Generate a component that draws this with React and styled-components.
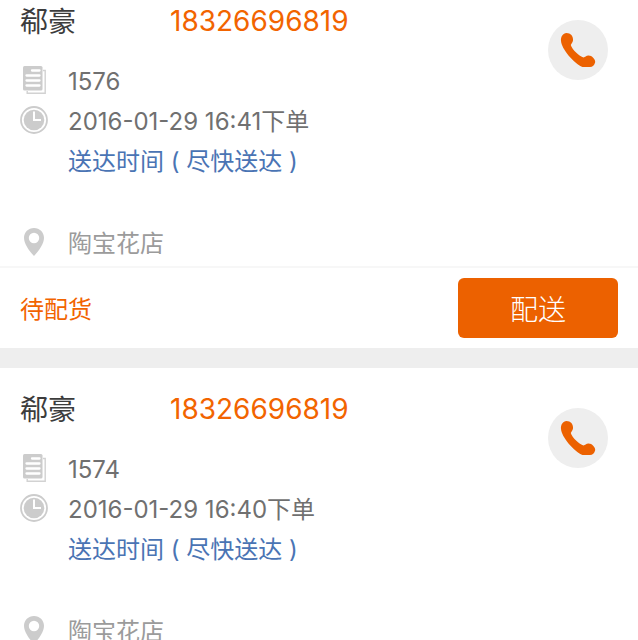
import React from "react";
import styled, { createGlobalStyle } from "styled-components";

const GlobalStyle = createGlobalStyle`
  * { box-sizing: border-box; }
  html { scrollbar-width: none; }
  body {
    margin: 0;
    background: #eeeeee;
    font-family: Inter, "Noto Sans CJK SC", sans-serif;
    font-optical-sizing: none;
    font-weight: 400;
  }
`;

const OrderList = styled.main`
  display: flex;
  flex-direction: column;
  gap: 20px;
`;

const Card = styled.article`
  background: #ffffff;
  padding-top: ${(p) => (p.$flush ? 0 : 20)}px;
`;

const CardBody = styled.div`
  display: flex;
  justify-content: space-between;
  align-items: flex-start;
  padding: 0 30px 4px 20px;
  border-bottom: 2px solid #f7f7f7;
`;

const Details = styled.div`
  flex: 1;
  min-width: 0;
`;

const Customer = styled.header`
  display: grid;
  grid-template-columns: 150px 1fr;
  align-items: center;
  height: 40px;
  margin-bottom: 20px;
`;

const Name = styled.h2`
  margin: 0;
  padding-top: 4px;
  font-size: 28px;
  line-height: 36px;
  font-weight: 400;
  color: #3c3c3c;
`;

const Phone = styled.a`
  padding-top: 2px;
  font-size: 28px;
  line-height: 38px;
  color: #f26400;
  text-decoration: none;
`;

const Row = styled.div`
  display: grid;
  grid-template-columns: 28px 1fr;
  column-gap: 20px;
  align-items: center;
  height: 40px;
  margin-top: ${(p) => (p.$spaced ? 42 : 0)}px;
`;

const tones = { normal: "#707070", info: "#4a74b4", muted: "#9b9b9b" };

const RowText = styled.span`
  grid-column: 2;
  padding-top: 4px;
  font-size: 24px;
  line-height: 36px;
  white-space: nowrap;
  color: ${(p) => tones[p.$tone || "normal"]};
`;

const CallButton = styled.button`
  display: flex;
  align-items: center;
  justify-content: center;
  width: 60px;
  height: 60px;
  margin-top: 20px;
  padding: 0;
  border: 0;
  border-radius: 50%;
  background: #eeeeee;
  cursor: pointer;
`;

const CardFooter = styled.footer`
  display: flex;
  align-items: center;
  justify-content: space-between;
  height: 80px;
  padding: 0 20px;
`;

const Status = styled.span`
  padding-top: 4px;
  font-size: 24px;
  line-height: 36px;
  color: #f26400;
`;

const DeliverButton = styled.button`
  width: 160px;
  height: 60px;
  padding: 4px 0 0;
  border: 0;
  border-radius: 6px;
  background: #ec6100;
  color: #ffffff;
  font-family: inherit;
  font-size: 28px;
  font-weight: 300;
  line-height: 36px;
  cursor: pointer;
`;

const DocumentIcon = () => (
  <svg width="28" height="28" viewBox="0 0 28 28" aria-hidden="true">
    <path d="M23 4.500H25.200V27.200H7.200V25" fill="none" stroke="#d2d2d2" strokeWidth="1.400" />
    <rect x="3" y="0" width="19.500" height="24.500" rx="1.500" fill="#cccccc" />
    <path d="M12 4.500H19.500M6.500 9.500H19.500M6.500 14.500H19.500M6.500 19.500H19.500" stroke="#ffffff" strokeWidth="2.300" strokeLinecap="round" />
  </svg>
);

const ClockIcon = () => (
  <svg width="28" height="28" viewBox="0 0 28 28" aria-hidden="true">
    <circle cx="14" cy="14" r="13" fill="none" stroke="#cccccc" strokeWidth="1.800" />
    <circle cx="14" cy="14" r="10.300" fill="#cccccc" />
    <path d="M14 5.500V14H21" fill="none" stroke="#ffffff" strokeWidth="2" />
  </svg>
);

const PinIcon = () => (
  <svg width="28" height="28" viewBox="0 0 28 28" aria-hidden="true">
    <path fillRule="evenodd" fill="#cccccc" d="M14 0C8.300 0 4 4.300 4 9.800C4 15.800 8.500 22 14 28C19.500 22 24 15.800 24 9.800C24 4.300 19.700 0 14 0ZM14 4.800A5.200 5.200 0 1 1 14 15.200A5.200 5.200 0 1 1 14 4.800Z" />
  </svg>
);

const HandsetIcon = () => (
  <svg width="60" height="60" viewBox="0 0 60 60" aria-hidden="true">
    <path fill="#ec6100" d="M13 21C12.600 16.500 15 13.500 18.500 13C22.500 13 25.500 16 25 20.500C24.800 22.500 23.300 23.400 22.800 25C24 29.500 31.500 36.500 35.500 37.400C37.200 37.200 38 35.600 40.500 35.500C43.800 35.400 47.300 39 47.200 42C46.500 45.300 44.500 47 42 47L34.500 47C26 43.500 13.500 29 13 21Z" />
  </svg>
);

const orders = [
  { number: "1576", placed: "2016-01-29 16:41下单" },
  { number: "1574", placed: "2016-01-29 16:40下单" },
];

function OrderCard({ order, flush }) {
  return (
    <Card $flush={flush}>
      <CardBody>
        <Details>
          <Customer>
            <Name>郗豪</Name>
            <Phone href="tel:18326696819">18326696819</Phone>
          </Customer>
          <Row>
            <DocumentIcon />
            <RowText>{order.number}</RowText>
          </Row>
          <Row>
            <ClockIcon />
            <RowText>{order.placed}</RowText>
          </Row>
          <Row>
            <RowText $tone="info">送达时间 ( 尽快送达 )</RowText>
          </Row>
          <Row $spaced>
            <PinIcon />
            <RowText $tone="muted">陶宝花店</RowText>
          </Row>
        </Details>
        <CallButton type="button" aria-label="拨打电话">
          <HandsetIcon />
        </CallButton>
      </CardBody>
      <CardFooter>
        <Status>待配货</Status>
        <DeliverButton type="button">配送</DeliverButton>
      </CardFooter>
    </Card>
  );
}

export default function App() {
  return (
    <>
      <GlobalStyle />
      <OrderList>
        {orders.map((order, index) => (
          <OrderCard key={order.number} order={order} flush={index === 0} />
        ))}
      </OrderList>
    </>
  );
}
